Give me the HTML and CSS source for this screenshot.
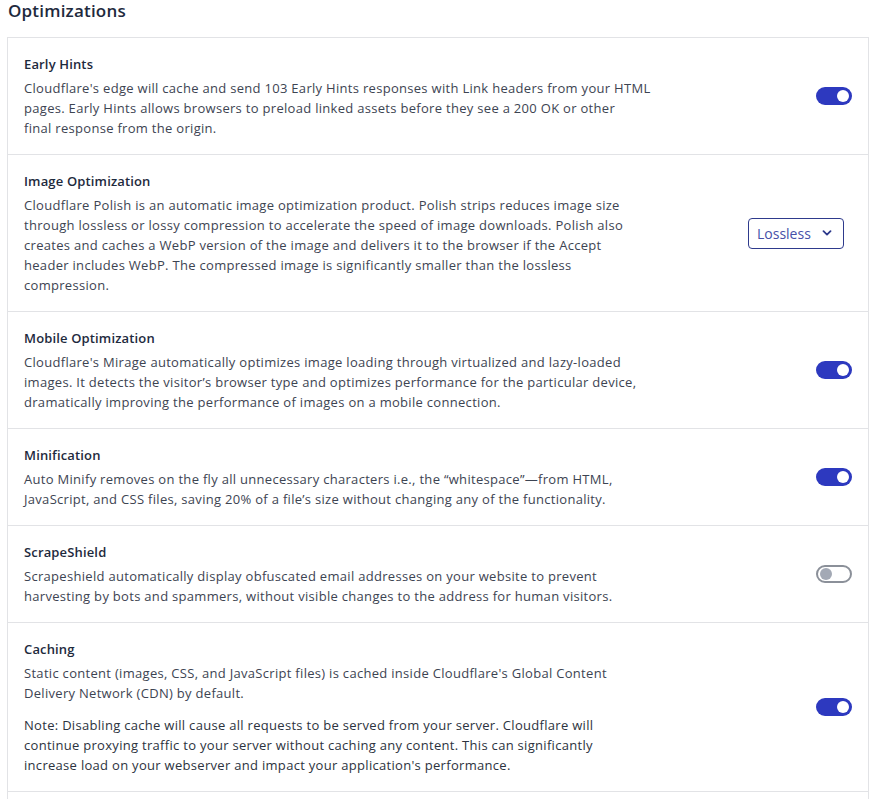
FILE: index.html
```html
<!DOCTYPE html>
<html lang="en">
<head>
<meta charset="utf-8">
<title>Optimizations</title>
<link rel="stylesheet" href="styles.css">
</head>
<body>
<h2 class="page-title">Optimizations</h2>
<div class="panel">
  <div class="row">
    <div class="text">
      <div class="name">Early Hints</div>
      <p class="desc">Cloudflare's edge will cache and send 103 Early Hints responses with Link headers from your HTML<br>pages. Early Hints allows browsers to preload linked assets before they see a 200 OK or other<br>final response from the origin.</p>
    </div>
    <span class="toggle on"><span class="knob"></span></span>
  </div>
  <div class="row">
    <div class="text">
      <div class="name">Image Optimization</div>
      <p class="desc">Cloudflare Polish is an automatic image optimization product. Polish strips reduces image size<br>through lossless or lossy compression to accelerate the speed of image downloads. Polish also<br>creates and caches a WebP version of the image and delivers it to the browser if the Accept<br>header includes WebP. The compressed image is significantly smaller than the lossless<br>compression.</p>
    </div>
    <div class="select">
      <span>Lossless</span>
      <svg width="10" height="6" viewBox="0 0 10 6"><path d="M1.5 1.2 L5 4.6 L8.5 1.2" fill="none" stroke="#2e3a8c" stroke-width="1.8" stroke-linecap="round" stroke-linejoin="round"/></svg>
    </div>
  </div>
  <div class="row">
    <div class="text">
      <div class="name">Mobile Optimization</div>
      <p class="desc">Cloudflare's Mirage automatically optimizes image loading through virtualized and lazy-loaded<br>images. It detects the visitor’s browser type and optimizes performance for the particular device,<br>dramatically improving the performance of images on a mobile connection.</p>
    </div>
    <span class="toggle on"><span class="knob"></span></span>
  </div>
  <div class="row">
    <div class="text">
      <div class="name">Minification</div>
      <p class="desc">Auto Minify removes on the fly all unnecessary characters i.e., the “whitespace”—from HTML,<br>JavaScript, and CSS files, saving 20% of a file’s size without changing any of the functionality.</p>
    </div>
    <span class="toggle on"><span class="knob"></span></span>
  </div>
  <div class="row">
    <div class="text">
      <div class="name">ScrapeShield</div>
      <p class="desc">Scrapeshield automatically display obfuscated email addresses on your website to prevent<br>harvesting by bots and spammers, without visible changes to the address for human visitors.</p>
    </div>
    <span class="toggle off"><span class="knob"></span></span>
  </div>
  <div class="row">
    <div class="text">
      <div class="name">Caching</div>
      <p class="desc">Static content (images, CSS, and JavaScript files) is cached inside Cloudflare's Global Content<br>Delivery Network (CDN) by default.</p>
      <p class="desc note">Note: Disabling cache will cause all requests to be served from your server. Cloudflare will<br>continue proxying traffic to your server without caching any content. This can significantly<br>increase load on your webserver and impact your application's performance.</p>
    </div>
    <span class="toggle on"><span class="knob"></span></span>
  </div>
  <div class="row last"></div>
</div>
</body>
</html>
```
FILE: styles.css
```css
html, body {
  background: #ffffff;
}
body {
  margin: 0 9px 0 7px;
  font-family: "Open Sans", "Noto Sans", sans-serif;
  color: #3b4350;
}
.page-title {
  margin: 0 0 15px 1px;
  font-size: 17px;
  line-height: 22px;
  font-weight: 600;
  letter-spacing: 0.2px;
  color: #1e2a3d;
}
.panel {
  border: 1px solid #e2e3e6;
  border-bottom: none;
}
.row {
  display: flex;
  align-items: center;
  justify-content: space-between;
  padding: 16px 16px 16px 16px;
  border-bottom: 1px solid #e2e3e6;
}
.row.last {
  height: 40px;
  border-bottom: none;
}
.text {
  flex: 1;
}
.name {
  font-size: 13px;
  line-height: 20px;
  font-weight: 600;
  letter-spacing: 0.15px;
  color: #1e2a3d;
  margin-bottom: 4px;
}
.desc {
  margin: 0;
  font-size: 13px;
  line-height: 20px;
  letter-spacing: 0.3px;
  color: #3d4452;
}
.desc.note {
  margin-top: 12px;
  font-weight: 500;
  color: #2c3340;
}
.toggle {
  flex: none;
  width: 36px;
  height: 18px;
  border-radius: 10px;
  box-sizing: border-box;
  display: flex;
  align-items: center;
  padding: 0 3px;
}
.toggle .knob {
  width: 12px;
  height: 12px;
  border-radius: 50%;
}
.toggle.on {
  background: #2d39bf;
  justify-content: flex-end;
}
.toggle.on .knob {
  background: #ffffff;
}
.toggle.off {
  background: #ffffff;
  border: 2px solid #8b9099;
  padding: 0 2px;
  justify-content: flex-start;
}
.toggle.off .knob {
  background: #a3a9b5;
}
.select {
  flex: none;
  width: 96px;
  height: 31px;
  box-sizing: border-box;
  border: 1px solid #2e3a8c;
  border-radius: 4px;
  display: flex;
  align-items: center;
  justify-content: space-between;
  padding: 0 11px 0 8px;
  margin-right: 8px;
  font-size: 14px;
  color: #4650a8;
}
```
